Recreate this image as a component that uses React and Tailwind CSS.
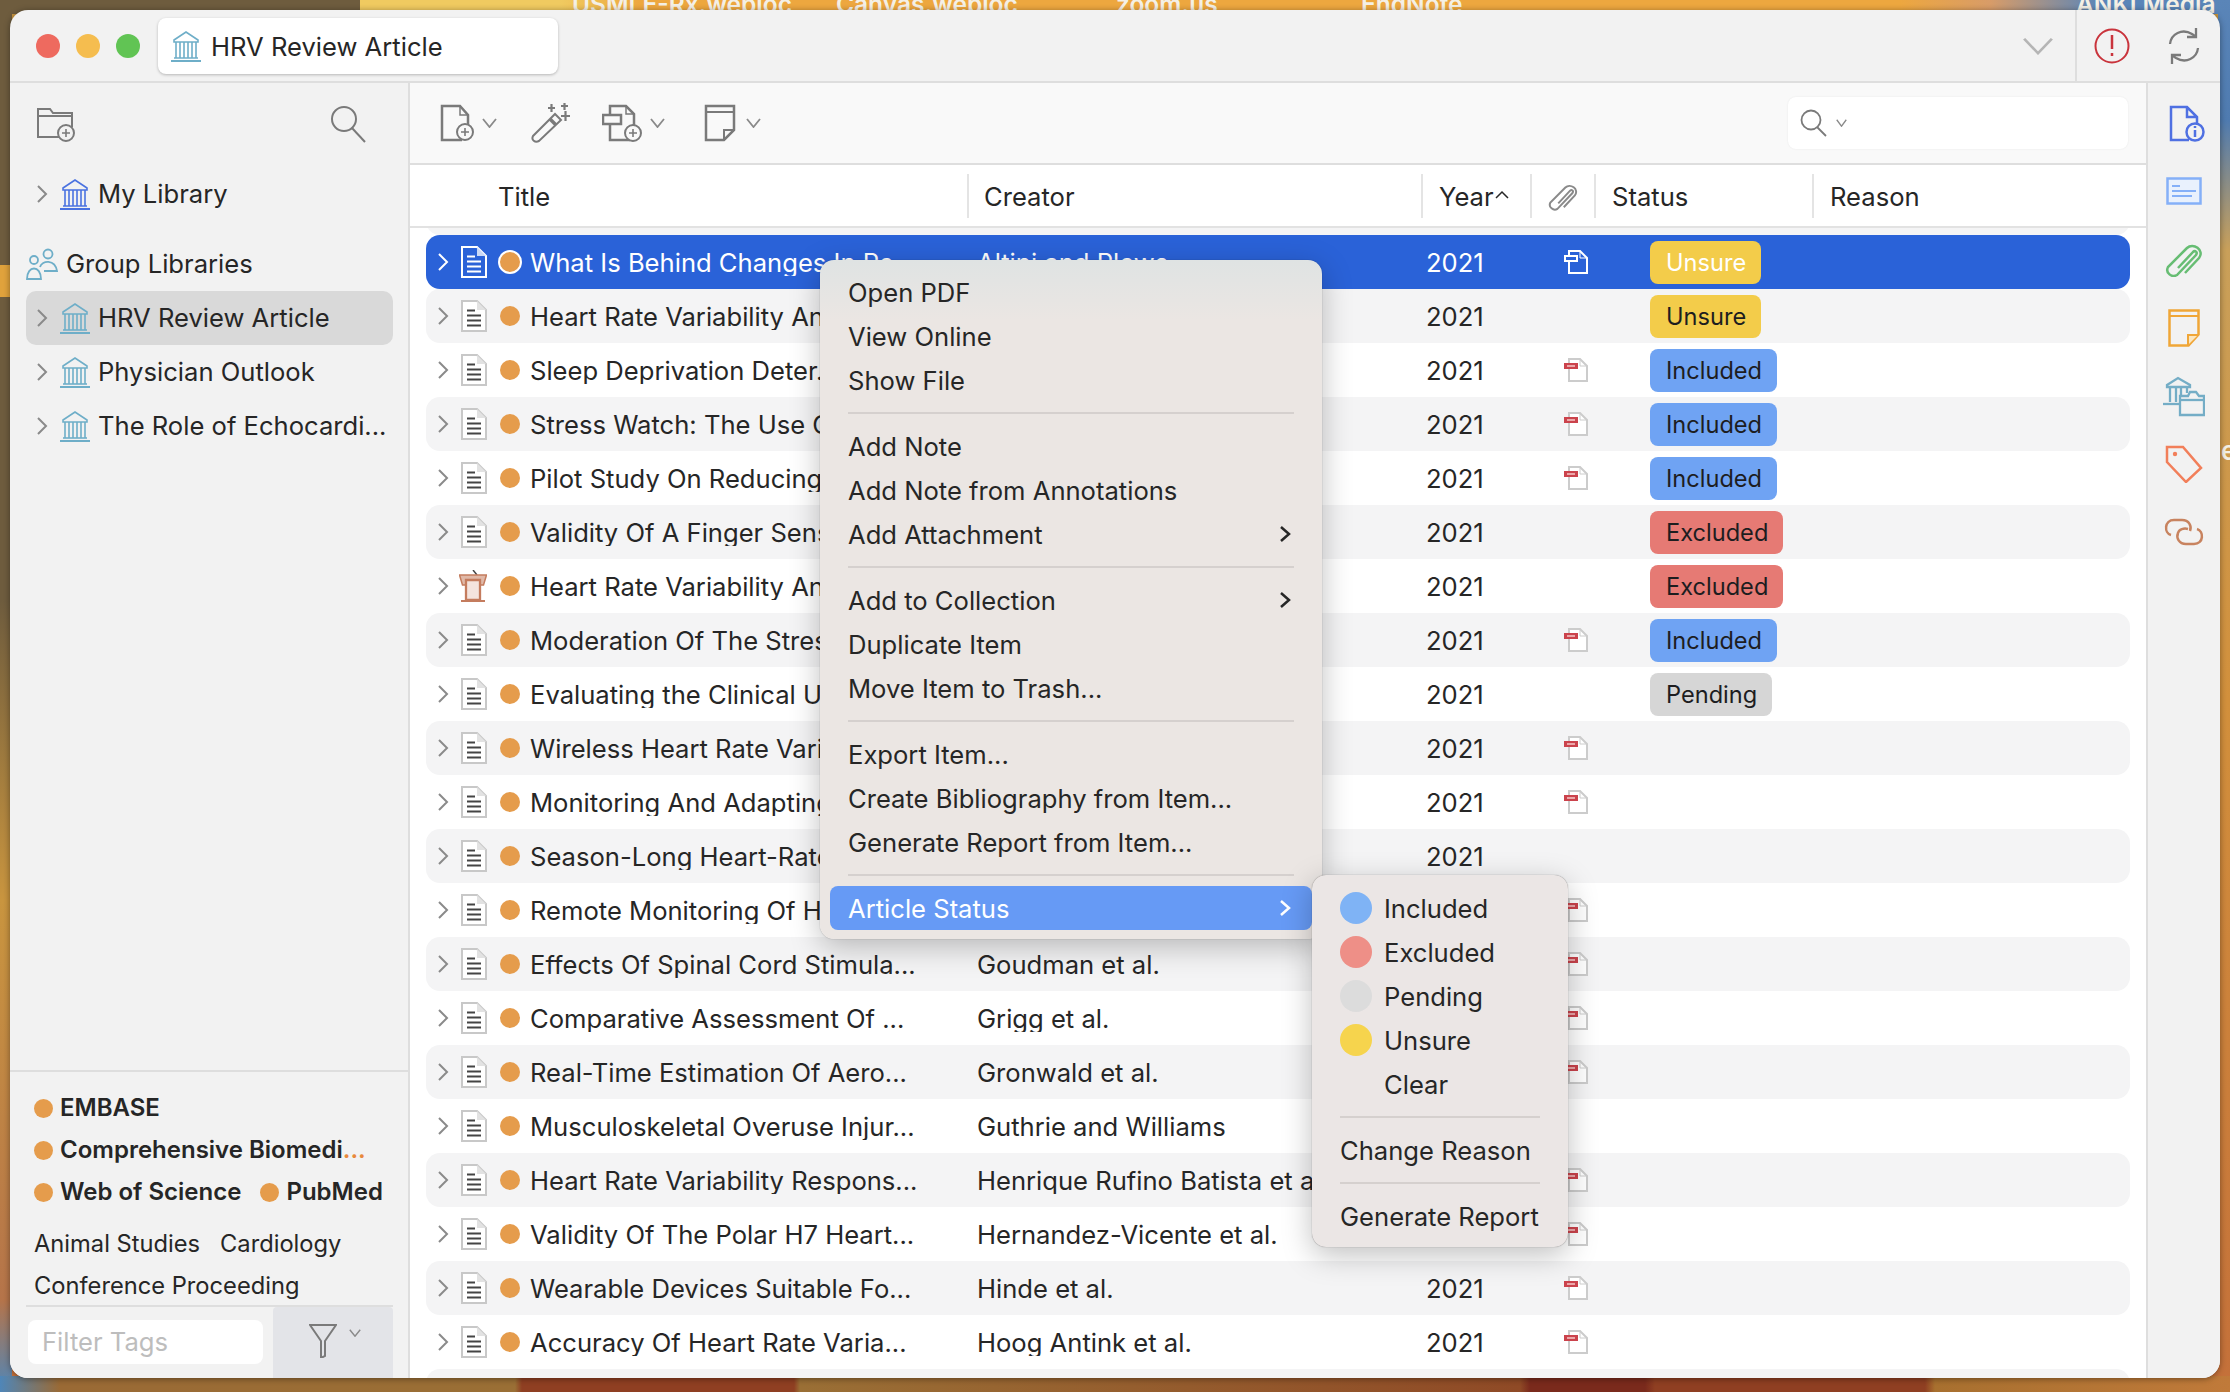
import React from "react";

const FONT = "font-['Inter','Liberation_Sans',sans-serif]";

const rows = [
  { title: "What Is Behind Changes In Re...", creator: "Altini and Plews", attach: true, status: "Unsure", selected: true },
  { title: "Heart Rate Variability An...", status: "Unsure" },
  { title: "Sleep Deprivation Deter...", attach: true, status: "Included" },
  { title: "Stress Watch: The Use Of...", attach: true, status: "Included" },
  { title: "Pilot Study On Reducing...", attach: true, status: "Included" },
  { title: "Validity Of A Finger Sens...", status: "Excluded" },
  { title: "Heart Rate Variability An...", status: "Excluded", lectern: true },
  { title: "Moderation Of The Stress...", attach: true, status: "Included" },
  { title: "Evaluating the Clinical U...", status: "Pending" },
  { title: "Wireless Heart Rate Vari...", attach: true },
  { title: "Monitoring And Adapting...", attach: true },
  { title: "Season-Long Heart-Rate...", },
  { title: "Remote Monitoring Of H...", attach: true },
  { title: "Effects Of Spinal Cord Stimula...", creator: "Goudman et al.", attach: true },
  { title: "Comparative Assessment Of ...", creator: "Grigg et al.", attach: true },
  { title: "Real-Time Estimation Of Aero...", creator: "Gronwald et al.", attach: true },
  { title: "Musculoskeletal Overuse Injur...", creator: "Guthrie and Williams" },
  { title: "Heart Rate Variability Respons...", creator: "Henrique Rufino Batista et al.", attach: true },
  { title: "Validity Of The Polar H7 Heart...", creator: "Hernandez-Vicente et al.", attach: true },
  { title: "Wearable Devices Suitable Fo...", creator: "Hinde et al.", attach: true },
  { title: "Accuracy Of Heart Rate Varia...", creator: "Hoog Antink et al.", attach: true },
];

const badgeClass = {
  Unsure: "w-[111px] bg-[#f3cc4a]",
  Included: "w-[127px] bg-[#6fa3f3]",
  Excluded: "w-[133px] bg-[#e67a74]",
  Pending: "w-[122px] bg-[#d6d6d6]",
};

const CLIP_PATH = "M13 25 28 9c2-2 5 0 3 3L12 32c-5 3-12-2-9-8L22 5c6-6 18 2 12 10L20 30";

const LibraryIcon = ({ color = "#6eaec8" }) => (
  <svg width="30" height="32" viewBox="0 0 30 32" fill="none" stroke={color} strokeWidth="1.6" className="shrink-0">
    <path d="M3 10 15 2l12 8v2H3Z" />
    <path d="M5 12v16M9 12v16M13 12v16M17 12v16M21 12v16M25 12v16" />
    <path d="M3 28h24" />
    <path d="M0 31h30" strokeWidth="2" />
  </svg>
);

const Chevron = ({ color = "#8a8a8a" }) => (
  <svg width="12" height="20" viewBox="0 0 12 20" fill="none" stroke={color} strokeWidth="2" className="shrink-0">
    <path d="M2 2l8 8-8 8" />
  </svg>
);

const DocIcon = ({ selected }) => {
  const line = selected ? "#ffffff" : "#444444";
  const edge = selected ? "#ffffff" : "#c8c8c8";
  return (
    <svg width="26" height="32" viewBox="0 0 26 32" fill="none" className="shrink-0">
      <path d="M1 1h15l9 9v21H1Z" stroke={edge} strokeWidth="2" fill={selected ? "none" : "#ffffff"} />
      <path d="M16 1v9h9Z" fill={selected ? "#c9d8f6" : "#e2e2e2"} />
      <path d="M6 10.500h8M6 15.500h14M6 20.500h14M6 25.500h14" stroke={line} strokeWidth="2" />
    </svg>
  );
};

const LecternIcon = () => (
  <svg width="28" height="32" viewBox="0 0 28 32" fill="none" className="shrink-0">
    <path d="M14 0l4 5" stroke="#444" strokeWidth="1.500" />
    <path d="M0.500 5h27l-3 10H3.500Z" fill="#e0b9a8" stroke="#c47c5e" strokeWidth="1.500" />
    <path d="M7 10h14v20H7Z" fill="#f4e4de" stroke="#c47c5e" strokeWidth="2.300" />
    <path d="M2 31h24" stroke="#c47c5e" strokeWidth="2" />
  </svg>
);

const AttachIcon = ({ selected }) => (
  <svg width="24" height="24" viewBox="0 0 24 24" fill="none">
    <path d="M5 1h11l7 7v15H5Z" stroke={selected ? "#ffffff" : "#cccccc"} strokeWidth="2" fill={selected ? "none" : "#ffffff"} />
    <path d="M16 1v7h7" stroke={selected ? "#ffffff" : "#cccccc"} strokeWidth="1" />
    {selected ? (
      <rect x="1" y="6" width="12" height="5" fill="#2a62d8" stroke="#ffffff" strokeWidth="2" />
    ) : (
      <>
        <rect x="0" y="5" width="14" height="6" fill="#cb434c" />
        <rect x="3" y="7" width="8" height="2" fill="#eba7a9" />
      </>
    )}
  </svg>
);

const SmallDown = ({ w = 15, h = 10, color = "#8a8a8a", sw = 1.800 }) => (
  <svg width={w} height={h} viewBox="0 0 15 10" fill="none" stroke={color} strokeWidth={sw} preserveAspectRatio="none">
    <path d="M1 1l6.500 8L14 1" />
  </svg>
);

const PlusBadge = ({ cx, cy, r = 8, color = "#7a7a7a" }) => (
  <>
    <circle cx={cx} cy={cy} r={r} fill="#f9f9f9" stroke={color} strokeWidth="2" />
    <path d={`M${cx - 4} ${cy}h8M${cx} ${cy - 4}v8`} stroke={color} strokeWidth="1.600" />
  </>
);

const Dot = ({ selected }) => (
  <span
    className={
      selected
        ? "ml-[11px] mr-[8px] size-[24px] shrink-0 rounded-full border-2 border-white bg-[#e59c4c]"
        : "ml-[13px] mr-[10px] size-[20px] shrink-0 rounded-full bg-[#e59c4c]"
    }
  />
);

const Row = ({ row, shaded }) => {
  const text = row.selected ? "text-white" : "text-[#262626]";
  const bg = row.selected ? "bg-[#2a62d8]" : shaded ? "bg-[#f4f4f5]" : "";
  return (
    <div className={`flex h-[54px] items-center rounded-[14px] pl-[11px] ${bg} ${text}`}>
      <Chevron color={row.selected ? "#ffffff" : "#8a8a8a"} />
      <span className={`flex ${row.lectern ? "ml-[10px] w-[28px]" : "ml-[12px] w-[26px]"}`}>
        {row.lectern ? <LecternIcon /> : <DocIcon selected={row.selected} />}
      </span>
      <Dot selected={row.selected} />
      <span className="w-[447px] shrink-0 truncate pt-[2px]">{row.title}</span>
      <span className="w-[449px] shrink-0 truncate pt-[2px]">{row.creator || ""}</span>
      <span className="w-[138px] shrink-0 pt-[2px]">2021</span>
      <span className="w-[86px] shrink-0">{row.attach && <AttachIcon selected={row.selected} />}</span>
      {row.status && (
        <span className={`flex h-[43px] items-center rounded-[8px] pl-[16px] pt-[1px] text-[23.6px] ${badgeClass[row.status]} ${row.selected ? "text-white" : "text-[#1d1d1f]"}`}>
          {row.status}
        </span>
      )}
    </div>
  );
};

const HeaderCell = ({ className, children, divider = true }) => (
  <div className={`flex h-[44px] shrink-0 items-center pt-[2px] ${divider ? "border-r-2 border-[#e4e4e4]" : ""} ${className}`}>
    {children}
  </div>
);

const SidebarRow = ({ label, active, color }) => (
  <div className={`flex h-[54px] items-center rounded-[10px] pl-[10px] ${active ? "bg-[#d9d9d9]" : ""}`}>
    <Chevron />
    <span className="ml-[12px]"><LibraryIcon color={color} /></span>
    <span className="ml-[8px] whitespace-nowrap">{label}</span>
  </div>
);

const TagDot = ({ label }) => (
  <span className="flex items-center whitespace-nowrap font-semibold">
    <span className="mr-[7px] size-[19px] shrink-0 rounded-full bg-[#e59c4c]" />
    {label}
  </span>
);

const Sidebar = () => (
  <aside className="flex w-[398px] shrink-0 flex-col bg-[#f2f2f2]">
    <div className="flex h-[82px] items-center justify-between pl-[26px] pr-[40px]">
      <svg width="40" height="36" viewBox="0 0 40 36" fill="none" stroke="#7a7a7a" strokeWidth="2">
        <path d="M27 31H2V3h12l3 4h19v14" />
        <path d="M2 10h34" />
        <circle cx="30" cy="27" r="8" fill="#f2f2f2" />
        <path d="M26 27h8M30 23v8" strokeWidth="1.600" />
      </svg>
      <svg width="38" height="38" viewBox="0 0 38 38" fill="none" stroke="#7a7a7a" strokeWidth="2">
        <circle cx="14" cy="14" r="12" />
        <path d="M22 23l13 14" />
      </svg>
    </div>
    <div className="pl-[16px] pr-[15px] pt-[2px]">
      <SidebarRow label="My Library" color="#4a72e0" />
    </div>
    <div className="flex h-[70px] items-center pl-[16px] pt-[16px]">
      <svg width="32" height="32" viewBox="0 0 32 32" fill="none" stroke="#6eaec8" strokeWidth="1.800">
        <circle cx="8" cy="12" r="4" />
        <circle cx="22" cy="6" r="4.500" />
        <path d="M1 31c0-14 14-14 14 0Z" />
        <path d="M14 19c2-7 15-8 17 4h-13" />
      </svg>
      <span className="ml-[8px]">Group Libraries</span>
    </div>
    <div className="pl-[16px] pr-[15px]">
      <SidebarRow label="HRV Review Article" active />
      <SidebarRow label="Physician Outlook" />
      <SidebarRow label="The Role of Echocardi..." />
    </div>
    <div className="flex-1" />
    <div className="border-t-2 border-[#dedede] text-[#262626]">
      <div className="flex flex-col gap-[12px] px-[24px] pt-[21px] text-[24px] leading-[30px]">
        <TagDot label="EMBASE" />
        <span className="flex items-center whitespace-nowrap font-semibold">
          <span className="mr-[7px] size-[19px] shrink-0 rounded-full bg-[#e59c4c]" />
          Comprehensive Biomedi<span className="text-[#e8893c]">...</span>
        </span>
        <div className="flex gap-[19px]">
          <TagDot label="Web of Science" />
          <TagDot label="PubMed" />
        </div>
      </div>
      <div className="flex flex-col gap-[12px] px-[24px] pt-[22px] text-[23.7px] leading-[30px]">
        <div className="flex gap-[20px]">
          <span>Animal Studies</span>
          <span>Cardiology</span>
        </div>
        <span>Conference Proceeding</span>
      </div>
      <div className="ml-[16px] mr-[15px] mt-[4px] flex h-[73px] border-t-2 border-[#dedede]">
        <div className="ml-[2px] mt-[13px] flex h-[44px] w-[235px] items-center rounded-[8px] bg-white pl-[14px] text-[#bdbdbd]">Filter Tags</div>
        <div className="ml-[10px] flex flex-1 items-center justify-center gap-[12px] rounded-t-[4px] bg-[#e3e4e8] pb-[4px] pl-[4px]">
          <svg width="28" height="34" viewBox="0 0 28 34" fill="none" stroke="#7a7a7a" strokeWidth="2">
            <path d="M1 1h26L16 17v15l-4 2V17Z" />
          </svg>
          <span className="mb-[16px]"><SmallDown w={12} h={8} /></span>
        </div>
      </div>
    </div>
  </aside>
);

const ToolbarChevron = () => <SmallDown w={15} h={10} />;

const Toolbar = () => (
  <div className="flex h-[82px] shrink-0 items-center border-b-2 border-[#dedede] bg-[#f9f9f9] pl-[30px] pr-[18px]">
    <svg width="36" height="38" viewBox="0 0 36 38" fill="none" stroke="#7a7a7a" strokeWidth="2.500">
      <path d="M22 36H2V2h18l8 9v12" />
      <path d="M20 2v9h8" strokeWidth="1.500" />
      <PlusBadge cx={25} cy={28} />
    </svg>
    <span className="ml-[6px]"><ToolbarChevron /></span>
    <svg className="ml-[34px]" width="40" height="40" viewBox="0 0 40 40" fill="none" stroke="#7a7a7a">
      <path d="M2 33 24 11l6 6L8 38c-4 2-8-1-6-5Z" strokeWidth="2" fill="#f9f9f9" />
      <path d="M19 16l6 6" strokeWidth="3.500" />
      <path d="M17 5h7M20.500 1v8M30 3h7M33.500 0v7M30 13h9M34.500 8v10" strokeWidth="2.200" />
    </svg>
    <svg className="ml-[31px]" width="42" height="38" viewBox="0 0 42 38" fill="none" stroke="#7a7a7a" strokeWidth="2.500">
      <path d="M28 36H8V2h16l8 8v14" />
      <path d="M24 2v8h8" strokeWidth="1.500" />
      <rect x="1" y="11" width="18" height="9" fill="#f9f9f9" />
      <PlusBadge cx={31} cy={29} />
    </svg>
    <span className="ml-[6px]"><ToolbarChevron /></span>
    <svg className="ml-[39px]" width="32" height="38" viewBox="0 0 32 38" fill="none" stroke="#7a7a7a" strokeWidth="2.500">
      <path d="M2 2h28v24l-10 10H2Z" />
      <path d="M2 8h28" strokeWidth="2" />
      <path d="M30 26H20v10" strokeWidth="2" />
    </svg>
    <span className="ml-[10px]"><ToolbarChevron /></span>
    <div className="ml-auto flex h-[52px] w-[340px] items-center gap-[8px] rounded-[8px] bg-white pl-[12px] shadow-[0_0_2px_rgba(0,0,0,0.08)]">
      <svg width="28" height="28" viewBox="0 0 28 28" fill="none" stroke="#7a7a7a" strokeWidth="1.800">
        <circle cx="11" cy="11" r="9.500" />
        <path d="M17 18l9 9" />
      </svg>
      <SmallDown w={11} h={8} />
    </div>
  </div>
);

const TableHeader = () => (
  <div className="flex h-[63px] shrink-0 items-center border-b-2 border-[#e2e2e2] bg-white pt-[1px]">
    <HeaderCell className="w-[559px] pl-[88px]">Title</HeaderCell>
    <HeaderCell className="w-[454px] pl-[15px]">Creator</HeaderCell>
    <HeaderCell className="w-[109px] pl-[16px]">
      Year
      <svg className="mb-[6px] ml-[1px]" width="14" height="9" viewBox="0 0 14 9" fill="none" stroke="#262626" strokeWidth="1.500">
        <path d="M1 8l6-6 6 6" />
      </svg>
    </HeaderCell>
    <HeaderCell className="w-[64px] pl-[16px]">
      <svg width="30" height="30" viewBox="0 0 38 34" fill="none" stroke="#8a8a8a" strokeWidth="2.500">
        <path d={CLIP_PATH} />
      </svg>
    </HeaderCell>
    <HeaderCell className="w-[218px] pl-[16px]">Status</HeaderCell>
    <HeaderCell className="pl-[16px]" divider={false}>Reason</HeaderCell>
  </div>
);

const Rail = () => (
  <aside className="flex w-[74px] shrink-0 flex-col items-center border-l-2 border-[#dedede] bg-[#f2f2f2] pt-[22px]">
    <svg className="ml-[6px]" width="36" height="38" viewBox="0 0 36 38" fill="none" stroke="#4f70e2" strokeWidth="2.500">
      <path d="M20 35H2V2h16l10 10v8M18 2v10h10" />
      <circle cx="26" cy="27" r="8.500" fill="#f2f2f2" />
      <path d="M26 25v7M26 21v2" strokeWidth="2.500" />
    </svg>
    <svg className="mt-[34px]" width="36" height="28" viewBox="0 0 36 28" fill="#e9f1fd" stroke="#85b0f8" strokeWidth="2.500">
      <rect x="1.500" y="1.500" width="33" height="25" />
      <path d="M6 9h8M6 14h24M6 19h20" strokeWidth="2" />
    </svg>
    <svg className="mt-[38px]" width="38" height="34" viewBox="0 0 38 34" fill="none" stroke="#67bd73" strokeWidth="2.500">
      <path d={CLIP_PATH} />
    </svg>
    <svg className="mt-[32px]" width="32" height="38" viewBox="0 0 32 38" fill="none" stroke="#f0a637" strokeWidth="2.500">
      <path d="M1.500 1.500h29v24l-10 11h-19Z" />
      <path d="M1.500 7h29" strokeWidth="2" />
      <path d="M30 26H20v10" fill="#fbe6bf" strokeWidth="2" />
    </svg>
    <svg className="mt-[28px]" width="42" height="42" viewBox="0 0 42 42" fill="none" stroke="#74adc6" strokeWidth="2.300">
      <path d="M4 10 15 3l12 7v2H4Z" />
      <path d="M7 12v15M13 12v15M18 12v10M24 12v6" />
      <path d="M0 29h16" />
      <path d="M17 40V21h8l2-4h6l3 4h5v19Z" />
      <path d="M17 25h24" />
    </svg>
    <svg className="mt-[28px]" width="38" height="38" viewBox="0 0 38 38" fill="none" stroke="#f27f5a" strokeWidth="2.500">
      <path d="M2 2h16l18 21-15 14L2 17Z" />
      <circle cx="10" cy="9" r="2.200" fill="#f27f5a" stroke="none" />
    </svg>
    <svg className="mt-[35px]" width="42" height="28" viewBox="0 0 42 28" fill="none" stroke="#c8835f" strokeWidth="2.500">
      <path d="M8 17C1 15 1 2 11 2h8c7 0 10 6 8 11" />
      <path d="M34 11c7 2 7 15-3 15h-8c-7 0-10-6-8-11 1-4 6-5 10-4" />
    </svg>
  </aside>
);

const MenuItem = ({ label, more, active }) => (
  <div className={`flex h-[44px] items-center justify-between pl-[18px] pr-[21px] ${active ? "rounded-[8px] bg-[#669af5] text-white" : ""}`}>
    <span className="pt-[2px]">{label}</span>
    {more && (
      <svg width="12" height="18" viewBox="0 0 12 18" fill="none" stroke={active ? "#ffffff" : "#262626"} strokeWidth="2.500">
        <path d="M2 2l8 7-8 7" />
      </svg>
    )}
  </div>
);

const MenuSeparator = ({ className }) => (
  <div className={`flex h-[22px] items-center ${className}`}>
    <div className="h-[2px] w-full bg-[#d5d0ce]" />
  </div>
);

const groups = [
  [{ label: "Open PDF" }, { label: "View Online" }, { label: "Show File" }],
  [{ label: "Add Note" }, { label: "Add Note from Annotations" }, { label: "Add Attachment", more: true }],
  [{ label: "Add to Collection", more: true }, { label: "Duplicate Item" }, { label: "Move Item to Trash..." }],
  [{ label: "Export Item..." }, { label: "Create Bibliography from Item..." }, { label: "Generate Report from Item..." }],
];

const statusItems = [
  { label: "Included", color: "bg-[#7fb3f5]" },
  { label: "Excluded", color: "bg-[#ee8f87]" },
  { label: "Pending", color: "bg-[#dcdcdc]" },
  { label: "Unsure", color: "bg-[#f6d44d]" },
  { label: "Clear", color: "" },
];

const ContextMenu = () => (
  <div className="absolute left-[810px] top-[250px] w-[502px] rounded-[14px] bg-[linear-gradient(180deg,#dfe3e3_0,#ebe6e3_60px)] px-[10px] pb-[9px] pt-[10px] text-[#262626] shadow-[0_0_1px_rgba(0,0,0,0.5),0_8px_30px_rgba(0,0,0,0.25)]">
    {groups.map((group, i) => (
      <div key={i}>
        {group.map((item) => (
          <MenuItem key={item.label} {...item} />
        ))}
        <MenuSeparator className="mx-[18px]" />
      </div>
    ))}
    <MenuItem label="Article Status" more active />
  </div>
);

const StatusMenu = () => (
  <div className="absolute left-[1302px] top-[865px] w-[256px] rounded-[14px] bg-[#ebe6e5] pb-[9px] pt-[11px] text-[#262626] shadow-[0_0_1px_rgba(0,0,0,0.5),0_8px_30px_rgba(0,0,0,0.25)]">
    {statusItems.map((item) => (
      <div key={item.label} className="flex h-[44px] items-center pl-[28px]">
        <span className={`size-[32px] shrink-0 rounded-full ${item.color}`} />
        <span className="ml-[12px] pt-[2px]">{item.label}</span>
      </div>
    ))}
    <MenuSeparator className="mx-[28px]" />
    <div className="flex h-[44px] items-center pl-[28px] pt-[2px]">Change Reason</div>
    <MenuSeparator className="mx-[28px]" />
    <div className="flex h-[44px] items-center pl-[28px] pt-[2px]">Generate Report</div>
  </div>
);

const App = () => (
  <div className={`relative h-[1392px] w-[2230px] overflow-hidden bg-[linear-gradient(180deg,#c9963f_0,#c4703a_100%)] ${FONT}`}>
    {/* desktop wallpaper edges */}
    <div className="absolute inset-x-0 top-0 h-[14px] bg-[linear-gradient(90deg,#6e5c3e_0,#6e5c3e_360px,#f0ca60_360px,#f0ca60_560px,#eda73f_640px,#eda73f_1900px,#d89c68_1990px,#5a85b8_2100px,#5a85b8_2230px)]" />
    <div className="absolute inset-y-0 left-0 w-[12px] bg-[linear-gradient(180deg,#6e5c3e_0,#6e5c3e_265px,#e0a23c_265px,#e0a23c_297px,#6e5c3e_297px,#6e5c3e_600px,#c9953f_900px,#b5744a_1300px,#4f86b8_1392px)]" />
    <div className="absolute inset-y-0 right-0 w-[12px] bg-[linear-gradient(180deg,#5a85b8_0,#4f7bb0_120px,#c9a05a_250px,#d2903c_700px,#c4703a_1392px)]" />
    <div className="absolute inset-x-0 bottom-0 h-[16px] bg-[linear-gradient(90deg,#4f86b8_0,#9a6a35_60px,#9a6f35_515px,#8f3f22_522px,#8f3f22_794px,#9a6f35_800px,#8f4a26_1520px,#7a2a1c_1530px,#7a2a1c_1645px,#8f3f22_1655px,#8f3f22_1925px,#a8702f_1935px,#c07a3a_2230px)]" />
    <div className="absolute inset-x-0 top-[-8px] h-[24px] text-[24.500px] font-semibold leading-none text-[#f4f0e6]">
      <span className="absolute left-[572px]">USMLE-Rx.webloc</span>
      <span className="absolute left-[836px]">Canvas.webloc</span>
      <span className="absolute left-[1116px]">zoom.us</span>
      <span className="absolute left-[1361px]">EndNote</span>
      <span className="absolute left-[2076px]">ANKI Media</span>
    </div>
    <span className="absolute left-[2221px] top-[438px] text-[26px] font-semibold leading-none text-[#f4f0e6]">e</span>

    <div className="absolute left-[10px] top-[10px] flex h-[1368px] w-[2210px] flex-col overflow-hidden rounded-[18px] bg-[#f2f2f2] text-[25.6px] leading-none text-[#262626] shadow-[0_1px_6px_rgba(0,0,0,0.4)]">
      {/* title bar */}
      <div className="flex h-[73px] shrink-0 items-center border-b-2 border-[#dedede] pl-[26px]">
        <div className="flex gap-[16px]">
          <span className="size-[24px] rounded-full bg-[#ee6a5f]" />
          <span className="size-[24px] rounded-full bg-[#f5bd4f]" />
          <span className="size-[24px] rounded-full bg-[#61c454]" />
        </div>
        <div className="ml-[18px] flex h-[56px] w-[400px] items-center rounded-[8px] bg-white pl-[13px] shadow-[0_1px_3px_rgba(0,0,0,0.25)]">
          <LibraryIcon />
          <span className="ml-[10px] pt-[2px]">HRV Review Article</span>
        </div>
        <div className="ml-auto mr-[21px]">
          <SmallDown w={32} h={18} color="#b5b5b5" sw={1.300} />
        </div>
        <div className="flex h-full w-[145px] items-center justify-between border-l-2 border-[#dedede] pl-[17px] pr-[20px]">
          <svg width="36" height="36" viewBox="0 0 36 36" fill="none" stroke="#c9343c" strokeWidth="2">
            <circle cx="18" cy="18" r="16.500" />
            <path d="M18 7v14" strokeWidth="2.500" />
            <path d="M18 25v3" strokeWidth="2.500" />
          </svg>
          <svg width="32" height="36" viewBox="0 0 32 36" fill="none" stroke="#7a7a7a" strokeWidth="2.300">
            <path d="M2 16C3 6 14 0 24 6l3 2" />
            <path d="M28 0v9h-9" />
            <path d="M30 20c-1 10-12 16-22 10l-3-2" />
            <path d="M4 36v-9h9" />
          </svg>
        </div>
      </div>
      <div className="flex min-h-0 flex-1">
        <Sidebar />
        <main className="flex min-w-0 flex-1 flex-col border-l-2 border-[#dedede] bg-white">
          <Toolbar />
          <TableHeader />
          <div className="min-h-0 flex-1 overflow-hidden px-[16px]">
            <div className="-mt-[47px] h-[54px] rounded-[14px] bg-[#f4f4f5]" />
            {rows.map((row, i) => (
              <Row key={i} row={row} shaded={i % 2 === 1} />
            ))}
            <div className="h-[54px] rounded-[14px] bg-[#f4f4f5]" />
          </div>
        </main>
        <Rail />
      </div>
      <ContextMenu />
      <StatusMenu />
    </div>
  </div>
);

export default App;
